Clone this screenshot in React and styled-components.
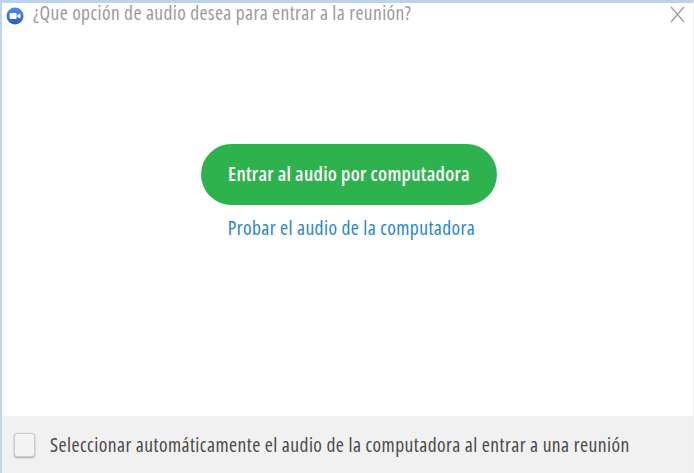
import React from "react"
import styled, { createGlobalStyle } from "styled-components"

const GlobalStyle = createGlobalStyle`
  html, body {
    margin: 0;
    padding: 0;
    background: #ffffff;
  }
`

const App = () => {
  return (
    <>
      <GlobalStyle />
      <Dialog>
        <TitleBar>
          <ZoomLogo />
          <Title>¿Que opción de audio desea para entrar a la reunión?</Title>
          <CloseIcon />
        </TitleBar>
        <Body>
          <JoinButton>Entrar al audio por computadora</JoinButton>
          <TestLink>Probar el audio de la computadora</TestLink>
        </Body>
        <Footer>
          <Checkbox />
          <FooterLabel>
            Seleccionar automáticamente el audio de la computadora al entrar a una reunión
          </FooterLabel>
        </Footer>
      </Dialog>
    </>
  )
}

const ZoomLogo = () => (
  <LogoSvg viewBox="0 0 18 18">
    <defs>
      <linearGradient id="logoFill" x1="0" y1="0" x2="0" y2="1">
        <stop offset="0" stopColor="#4f8fe6" />
        <stop offset="1" stopColor="#2a5fb8" />
      </linearGradient>
    </defs>
    <circle cx="9" cy="9" r="8.5" fill="url(#logoFill)" />
    <rect x="3.6" y="6" width="7" height="6" rx="1.2" fill="#ffffff" />
    <path d="M11.2 8.2 L14.4 6.2 V11.8 L11.2 9.8 Z" fill="#ffffff" />
  </LogoSvg>
)

const CloseIcon = () => (
  <CloseSvg viewBox="0 0 15 17">
    <path d="M1 1 L14 16 M14 1 L1 16" stroke="#a0a0a0" strokeWidth="1.4" fill="none" />
  </CloseSvg>
)

const Dialog = styled.div`
  width: 694px;
  height: 473px;
  box-sizing: border-box;
  display: flex;
  flex-direction: column;
  background: #ffffff;
  border-top: 3px solid #bdd3ea;
  border-left: 2px solid #bfd5ee;
  border-right: 1px solid #f0f0f0;
  font-family: "Open Sans", "Noto Sans", sans-serif;
  font-stretch: 75%;
  font-size: 19.5px;
  overflow: hidden;
`

const TitleBar = styled.div`
  height: 22px;
  display: flex;
  align-items: center;
  padding: 0 8px 0 4px;
  flex: none;
`

const LogoSvg = styled.svg`
  width: 18px;
  height: 18px;
  flex: none;
  margin-top: 4px;
`

const Title = styled.div`
  margin-left: 9px;
  padding-bottom: 4px;
  flex: 1;
  letter-spacing: 0.39px;
  color: #9b9b9b;
  white-space: nowrap;
`

const CloseSvg = styled.svg`
  width: 15px;
  height: 17px;
  flex: none;
`

const Body = styled.div`
  flex: 1;
  display: flex;
  flex-direction: column;
  align-items: center;
  padding: 119px 0 0 3px;
`

const JoinButton = styled.div`
  width: 296px;
  height: 61px;
  box-sizing: border-box;
  padding-bottom: 2px;
  border-radius: 31px;
  background: #2db24e;
  color: #ffffff;
  display: flex;
  align-items: center;
  justify-content: center;
  font-weight: 600;
  letter-spacing: 0.3px;
  white-space: nowrap;
`

const TestLink = styled.div`
  margin: 9px 0 0 5px;
  letter-spacing: 0.42px;
  color: #2b85c8;
  white-space: nowrap;
`

const Footer = styled.div`
  height: 57px;
  flex: none;
  display: flex;
  align-items: center;
  background: #f1f1f1;
  padding: 0 0 0 12px;
`

const Checkbox = styled.div`
  width: 21px;
  height: 24px;
  box-sizing: border-box;
  flex: none;
  border-radius: 3px;
  border: 1px solid #c9c9c9;
  background: #f4f4f4;
  box-shadow: 0 1px 2px rgba(0, 0, 0, 0.3);
`

const FooterLabel = styled.div`
  margin-left: 15px;
  letter-spacing: 0.45px;
  color: #4a4a4a;
  white-space: nowrap;
`

export default App
